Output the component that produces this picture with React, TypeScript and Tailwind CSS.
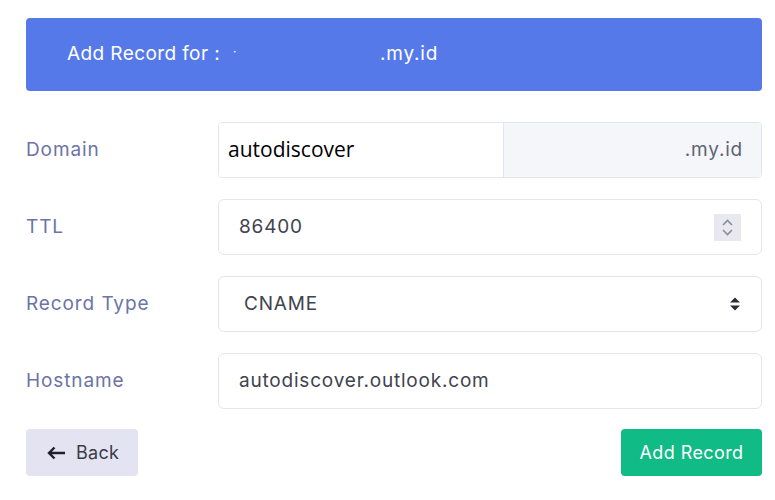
import React from "react";

const poppins = { fontFamily: "Inter, 'Open Sans', sans-serif" };

export default function App() {
  return (
    <div className="w-[775px] h-[500px] bg-white" style={poppins}>
      <div className="pt-[18px] px-[26px] pr-[13px]">
        <div className="h-[73px] rounded-[4px] bg-[#5679ea] flex items-center pl-[41px] text-white text-[19px] tracking-[0.4px]">
          <div className="w-[313px] flex items-center">
            <span>Add Record for :</span>
            <span className="ml-[13px] text-[12px] relative -top-[3px]">·</span>
          </div>
          <span className="tracking-[0.8px]">.my.id</span>
        </div>
        <div className="mt-[31px] flex flex-col gap-[21px]">
          <div className="flex items-center">
            <div className="w-[192px] text-[19px] tracking-[0.9px] text-[#6c74a6]">Domain</div>
            <div className="flex-1 h-[56px] flex border border-[#e3e6ef] rounded-[4px] overflow-hidden">
              <div className="w-[284px] bg-white flex items-center pl-[9px] text-[21px] text-black" style={{ fontFamily: "'Open Sans', 'Noto Sans', sans-serif" }}>autodiscover</div>
              <div className="flex-1 bg-[#f5f6f9] border-l border-[#e3e6ef] flex items-center justify-end pr-[18px] text-[19px] tracking-[0.8px] text-[#5f6372]">.my.id</div>
            </div>
          </div>
          <div className="flex items-center">
            <div className="w-[192px] text-[19px] tracking-[0.9px] text-[#6c74a6]">TTL</div>
            <div className="flex-1 h-[56px] border border-[#e3e6ef] rounded-[6px] flex items-center pl-[20px] pr-[20px] text-[19px] tracking-[0.8px] text-[#41434f]">
              <span className="flex-1">86400</span>
              <div className="w-[27px] h-[27px] bg-[#e8e8ee] flex flex-col items-center justify-center gap-[3px]">
                <svg width="11" height="7" viewBox="0 0 11 7"><path d="M1 6 L5.5 1.5 L10 6" stroke="#8a8d99" strokeWidth="1.6" fill="none" /></svg>
                <svg width="11" height="7" viewBox="0 0 11 7"><path d="M1 1 L5.5 5.5 L10 1" stroke="#8a8d99" strokeWidth="1.6" fill="none" /></svg>
              </div>
            </div>
          </div>
          <div className="flex items-center">
            <div className="w-[192px] text-[19px] tracking-[0.9px] text-[#6c74a6]">Record Type</div>
            <div className="flex-1 h-[56px] border border-[#e3e6ef] rounded-[6px] flex items-center pl-[25px] pr-[20px] text-[19px] tracking-[0.8px] text-[#41434f]">
              <span className="flex-1">CNAME</span>
              <svg width="12" height="16" viewBox="0 0 12 16"><path d="M1 6.5 L6 1.5 L11 6.5 Z" fill="#2b2d36" /><path d="M1 9.5 L6 14.5 L11 9.5 Z" fill="#2b2d36" /></svg>
            </div>
          </div>
          <div className="flex items-center">
            <div className="w-[192px] text-[19px] tracking-[0.9px] text-[#6c74a6]">Hostname</div>
            <div className="flex-1 h-[56px] border border-[#e3e6ef] rounded-[6px] flex items-center pl-[20px] text-[19px] tracking-[0.8px] text-[#41434f]">
              autodiscover.outlook.com
            </div>
          </div>
        </div>
        <div className="mt-[20px] flex items-center justify-between">
          <button className="w-[112px] h-[47px] rounded-[4px] bg-[#e3e3f1] flex items-center pl-[21px] gap-[10px] text-[18px] tracking-[0.3px] text-[#3a3c48]">
            <svg width="19" height="14" viewBox="0 0 19 14"><path d="M18 7 H2.5 M7.5 1.5 L2 7 L7.5 12.5" stroke="#1f2029" strokeWidth="2.4" fill="none" /></svg>
            <span>Back</span>
          </button>
          <button className="w-[141px] h-[47px] rounded-[4px] bg-[#10bb85] text-white text-[18px] tracking-[0.4px] flex items-center justify-center">
            Add Record
          </button>
        </div>
      </div>
    </div>
  );
}
